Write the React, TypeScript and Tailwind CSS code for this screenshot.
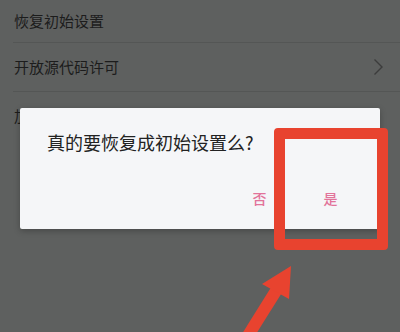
import React from "react";

const font = { fontFamily: '"Noto Sans CJK SC", "Noto Sans", sans-serif' };

export default function App() {
  return (
    <div className="relative w-[400px] h-[332px] overflow-hidden bg-[#5e605f]" style={font}>
      {/* dimmed settings list */}
      <div className="flex flex-col">
        <div className="h-[42px] flex items-center pl-[14px] text-[15px] text-[#1c1c1c]">恢复初始设置</div>
        <div className="h-px ml-[13px] bg-[#545655]" />
        <div className="h-[48px] flex items-center justify-between pl-[14px] pr-[16px] text-[15px] text-[#1c1c1c]">
          <span>开放源代码许可</span>
          <svg width="11" height="18" viewBox="0 0 11 18" fill="none">
            <path d="M1.5 1.5 L9 9 L1.5 16.5" stroke="#3c3c3c" strokeWidth="1.4" />
          </svg>
        </div>
        <div className="h-px ml-[13px] bg-[#545655]" />
        <div className="h-[48px] flex items-center pl-[14px] text-[15px] text-[#1c1c1c]">加入用户体验改进计划</div>
      </div>

      {/* dialog */}
      <div className="absolute left-[20px] top-[108px] w-[360px] h-[121px] bg-[#f5f6f8] rounded-[2px] shadow-[0_2px_6px_rgba(0,0,0,0.25)] flex flex-col">
        <div className="pl-[27px] pt-[21px] text-[18px] leading-[26px] text-[#222222]">真的要恢复成初始设置么?</div>
        <div className="flex justify-end mt-auto mb-[22px] text-[14px] leading-[18px] font-medium text-[#e2739a]">
          <div className="w-[71px] flex justify-center">否</div>
          <div className="w-[71px] mr-[14px] flex justify-center">是</div>
        </div>
      </div>

      {/* red annotation box */}
      <div className="absolute left-[274px] top-[128px] w-[114px] h-[122px] border-[11px] border-[#e8432f] rounded-[4px]" />

      {/* red arrow */}
      <svg className="absolute left-0 top-0" width="400" height="332" viewBox="0 0 400 332">
        <line x1="244" y1="342" x2="279" y2="286" stroke="#e8432f" strokeWidth="12" />
        <polygon points="291,266 262,284 289,299" fill="#e8432f" />
      </svg>
    </div>
  );
}
